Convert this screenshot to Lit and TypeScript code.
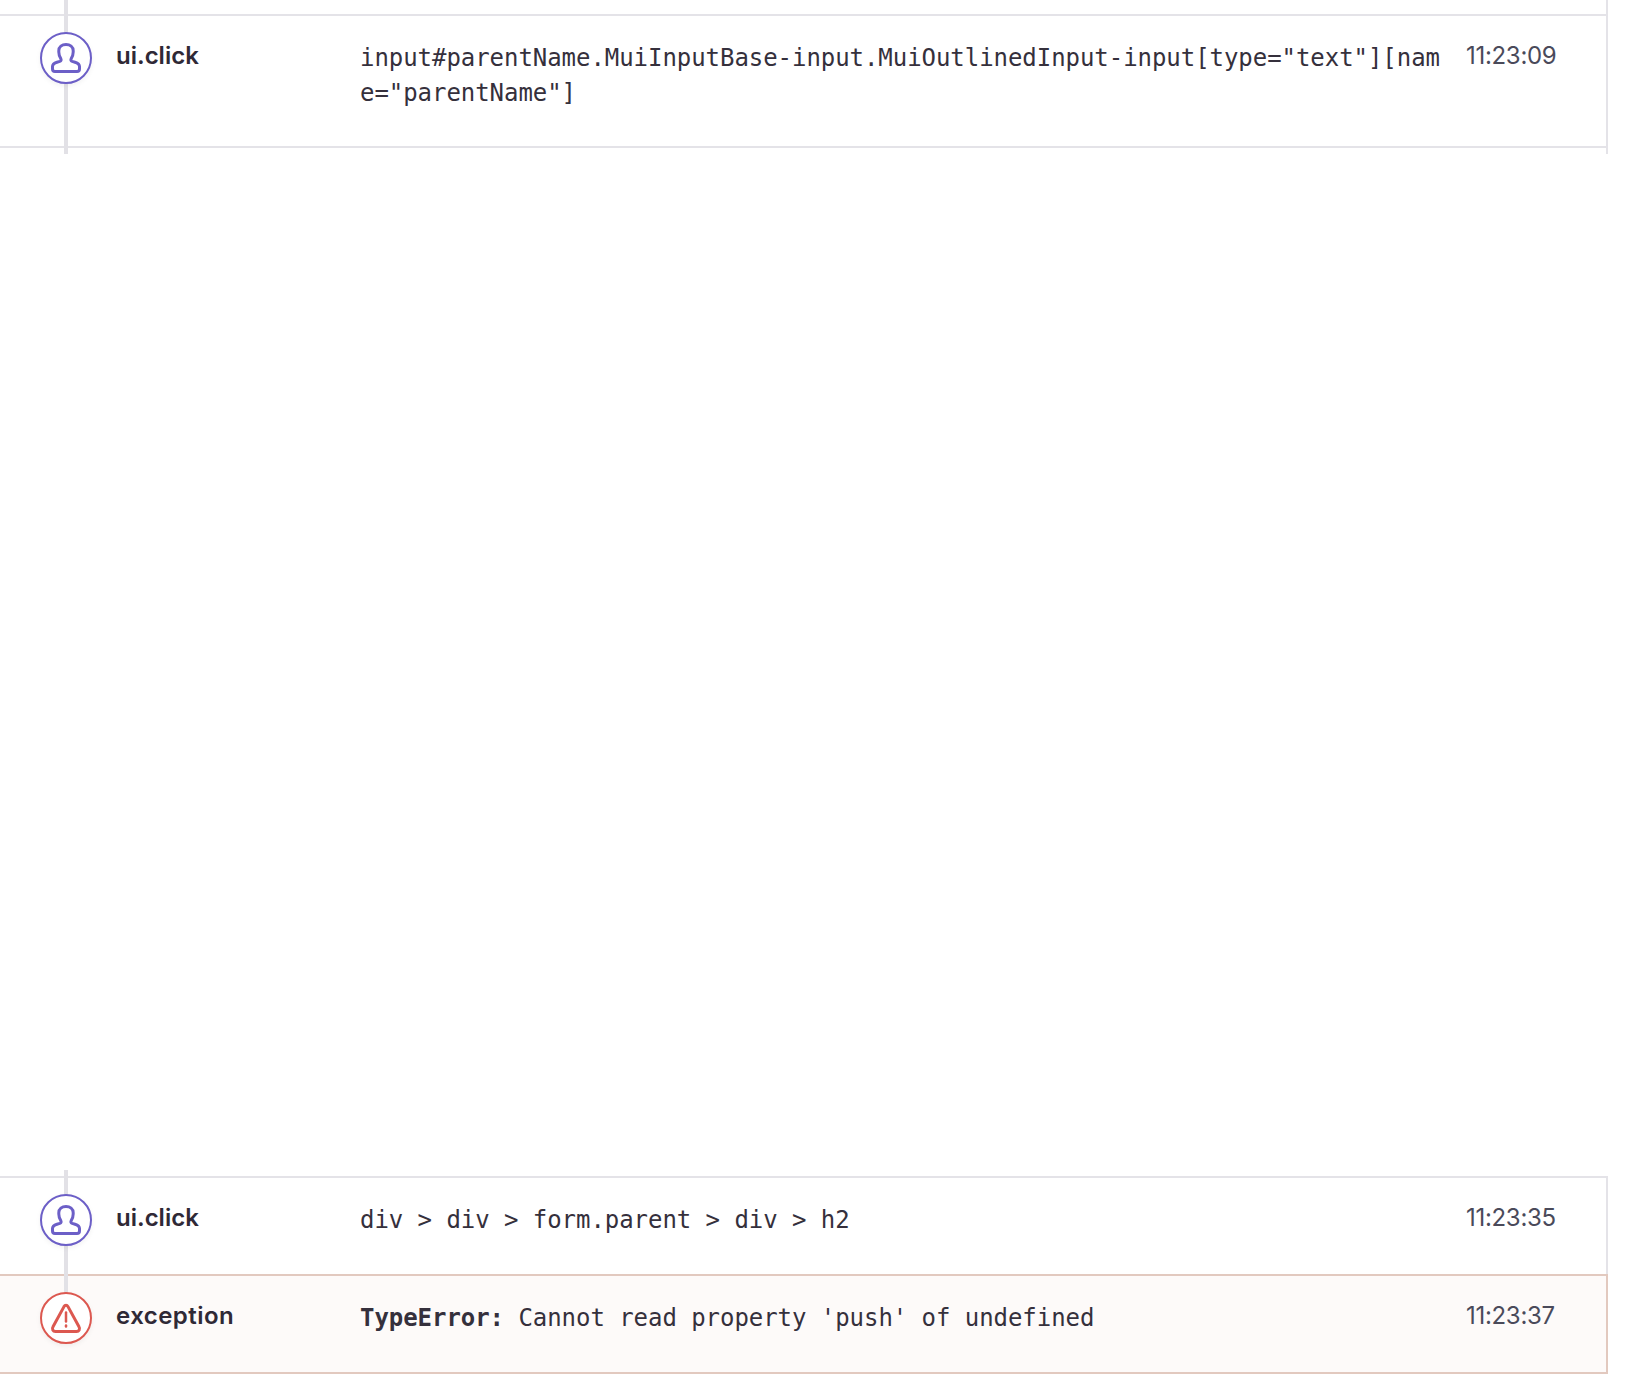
import { LitElement, html, css, svg } from "lit";
import { customElement } from "lit/decorators.js";

const person = svg`<path d="M15 39.5H37A2.5 2.5 0 0 0 39.5 37V34.5C39.5 32 37.5 31 35 30.2L32.2 29.4C30.8 28.9 30.6 27.8 31.2 26.6C32.4 24.8 33.2 22.8 33.2 20V18.8C33.2 15 30 12.5 26 12.5C22 12.5 18.8 15 18.8 18.8V20C18.8 22.8 19.6 24.8 20.8 26.6C21.4 27.8 21.2 28.9 19.8 29.4L17 30.2C14.5 31 12.5 32 12.5 34.5V37A2.5 2.5 0 0 0 15 39.5Z"/>`;
const warn = svg`<path d="M24 14.6L13 34.8C11.6 37.2 13 39.5 15.4 39.5H36.6C39 39.5 40.4 37.2 39 34.8L28 14.6C27 12.8 25 12.8 24 14.6Z"/><path class="mark" d="M26 20.5V29.5"/><path class="mark" d="M26 33.6V34.4"/>`;

const icon = (kind: "ui" | "err") => html`
  <svg class="icon ${kind}" viewBox="0 0 52 52" width="52" height="52">
    <circle cx="26" cy="26" r="25"></circle>
    ${kind === "ui" ? person : warn}
  </svg>`;

@customElement("app-root")
export class AppRoot extends LitElement {
  static styles = css`
    :host {
      display: flex;
      flex-direction: column;
      height: 1380px;
      width: 1608px;
      background: #fff;
      color: #2f2936;
      font-family: Inter, "Liberation Sans", sans-serif;
      font-size: 24px;
    }
    .segment {
      position: relative;
      box-sizing: border-box;
      border-right: 2px solid #e4e3e8;
    }
    .top { padding: 14px 0 6px; }
    .bottom { margin-bottom: 6px; border-right: none; }
    .bottom .row { border-right: 2px solid #e4e3e8; }
    .line {
      position: absolute;
      left: 64px;
      top: 0;
      bottom: 0;
      width: 4px;
      background: #e2e1e6;
    }
    .bottom .line { bottom: 74px; }
    .spacer { flex: 1; }
    .row {
      display: grid;
      grid-template-columns: 76px 244px 1106px 1fr;
      box-sizing: border-box;
      padding-left: 40px;
      border-top: 2px solid #e4e3e8;
    }
    .click { padding-top: 16px; }
    .first { border-bottom: 2px solid #e4e3e8; height: 134px; }
    .second { height: 98px; margin-top: 6px; }
    .exception {
      height: 100px;
      padding-top: 16px;
      background: #fdfaf9;
      border: 2px solid #e2c9bf;
      border-left: none;
    }
    .bottom .exception { border-right: 2px solid #e2c9bf; }
    .icon {
      position: relative;
      z-index: 1;
      fill: none;
      stroke-width: 3;
      stroke-linejoin: round;
      stroke-linecap: round;
      filter: drop-shadow(0 2px 2px rgba(0, 0, 0, 0.05));
    }
    .icon circle { fill: #fff; stroke-width: 2; }
    .icon .mark { stroke-width: 2.5; }
    .icon.ui { stroke: #6c5fc7; }
    .icon.err { stroke: #dc5850; }
    .label {
      font-weight: 600;
      font-size: 24px;
      line-height: 34px;
      padding-top: 7px;
    }
    .exception .label { letter-spacing: 0.45px; }
    .msg {
      font-family: "DejaVu Sans Mono", "Liberation Mono", monospace;
      font-size: 24px;
      letter-spacing: -0.05px;
      line-height: 35px;
      padding: 9px 16px 0 0;
      word-break: break-all;
      color: #35303c;
    }
    .msg b { font-weight: 700; }
    .time {
      line-height: 34px;
      padding-top: 7px;
      letter-spacing: -0.3px;
      color: #4a4a5a;
    }
  `;

  render() {
    return html`
      <div class="segment top">
        <div class="line"></div>
        <div class="row click first">
          ${icon("ui")}
          <div class="label">ui.click</div>
          <div class="msg">input#parentName.MuiInputBase-input.MuiOutlinedInput-input[type="text"][name="parentName"]</div>
          <div class="time">11:23:09</div>
        </div>
      </div>
      <div class="spacer"></div>
      <div class="segment bottom">
        <div class="line"></div>
        <div class="row click second">
          ${icon("ui")}
          <div class="label">ui.click</div>
          <div class="msg">div &gt; div &gt; form.parent &gt; div &gt; h2</div>
          <div class="time">11:23:35</div>
        </div>
        <div class="row exception">
          ${icon("err")}
          <div class="label">exception</div>
          <div class="msg"><b>TypeError:</b> Cannot read property 'push' of undefined</div>
          <div class="time">11:23:37</div>
        </div>
      </div>
    `;
  }
}
